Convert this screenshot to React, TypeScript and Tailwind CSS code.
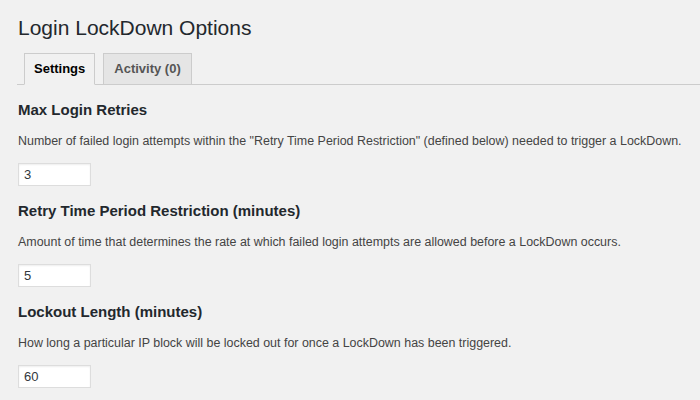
import React from 'react';

const sections = [
  {
    title: 'Max Login Retries',
    desc: 'Number of failed login attempts within the "Retry Time Period Restriction" (defined below) needed to trigger a LockDown.',
    value: '3',
  },
  {
    title: 'Retry Time Period Restriction (minutes)',
    desc: 'Amount of time that determines the rate at which failed login attempts are allowed before a LockDown occurs.',
    value: '5',
  },
  {
    title: 'Lockout Length (minutes)',
    desc: 'How long a particular IP block will be locked out for once a LockDown has been triggered.',
    value: '60',
  },
];

const App = () => {
  return (
    <div className="w-[700px] h-[400px] overflow-hidden bg-[#f1f1f1] font-['Liberation_Sans',Arial,sans-serif] text-[#444]">
      <div className="pl-[18px] pt-[14px]">
        <h1 className="text-[21px] leading-[27px] text-[#23282d]">Login LockDown Options</h1>

        <div className="mt-[12px] flex items-end border-b border-[#ccc] pl-[7px] -ml-px">
          <div className="-mb-px h-[32px] flex items-center px-[9px] border border-[#ccc] border-b-[#f1f1f1] bg-[#f1f1f1] text-[13px] font-bold text-[#000]">
            Settings
          </div>
          <div className="ml-[8px] h-[31px] flex items-center px-[10px] border border-[#ccc] border-b-0 bg-[#e5e5e5] text-[13px] font-bold text-[#555]">
            Activity (0)
          </div>
        </div>

        <div className="pt-[15px]">
          {sections.map((s, i) => (
            <div key={i} className={i > 0 ? 'mt-[15px]' : ''}>
              <h2 className="text-[15px] leading-[20px] font-bold text-[#23282d]">{s.title}</h2>
              <p className="mt-[12px] text-[12.45px] leading-[18px] text-[#444] whitespace-nowrap">{s.desc}</p>
              <input
                readOnly
                value={s.value}
                className="mt-[13px] block w-[73px] h-[23px] px-[5px] bg-white border border-[#ddd] text-[13px] text-[#32373c] shadow-[inset_0_1px_2px_rgba(0,0,0,0.07)] outline-none"
              />
            </div>
          ))}
        </div>
      </div>
    </div>
  );
};

export default App;
